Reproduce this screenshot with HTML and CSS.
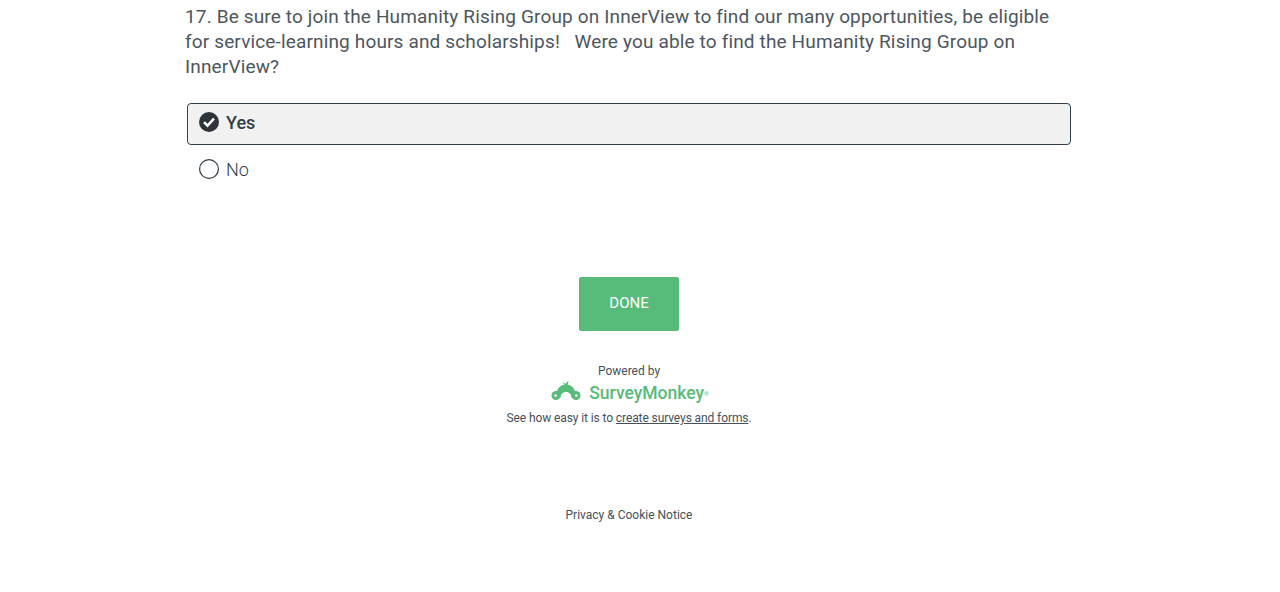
FILE: index.html
```html
<!DOCTYPE html>
<html lang="en">
<head>
  <meta charset="UTF-8">
  <title>Survey</title>
  <link rel="stylesheet" href="styles.css">
</head>
<body>
  <main class="survey">
    <h1 class="question">17. Be sure to join the Humanity Rising Group on InnerView to find our many opportunities, be eligible for service-learning hours and scholarships! &nbsp; Were you able to find the Humanity Rising Group on InnerView?</h1>

    <div class="options">
      <label class="option selected">
        <svg class="mark" width="20" height="20" viewBox="0 0 20 20">
          <circle cx="10" cy="10" r="10" fill="#2f343a"/>
          <path d="M5 10.200l3.500 3.500 6.500-7" fill="none" stroke="#fff" stroke-width="2.500"/>
        </svg>
        <span>Yes</span>
      </label>
      <label class="option">
        <svg class="mark" width="20" height="20" viewBox="0 0 20 20">
          <circle cx="10" cy="10" r="9.400" fill="#fff" stroke="#333e48" stroke-width="1.200"/>
        </svg>
        <span>No</span>
      </label>
    </div>

    <div class="actions">
      <button class="done" type="button">DONE</button>
    </div>

    <footer class="footer">
      <p class="powered">Powered by</p>
      <div class="brand">
        <svg class="brand-icon" width="30" height="20" viewBox="0 0 30 20">
          <path d="M15 3.500C9.500 3.500 6 7.500 5.500 13l4 4C9.600 13.500 11.500 11 15 11s5.400 2.500 5.500 6l4-4C24 7.500 20.500 3.500 15 3.500z" fill="#57bb7a"/>
          <path d="M13.500 4C13 2.500 12 2 11 1.800 12.500 1.300 14 2 15 3 15.300 1.800 16 .6 17.500 0 17.200 1.500 17 3 16.500 4z" fill="#57bb7a"/>
          <circle cx="5" cy="14.500" r="4.500" fill="#57bb7a"/>
          <circle cx="25" cy="14.500" r="4.500" fill="#57bb7a"/>
          <circle cx="4.600" cy="14.500" r="1.300" fill="#fff"/>
          <circle cx="25.400" cy="14.500" r="1.300" fill="#fff"/>
        </svg>
        <span class="brand-name">SurveyMonkey</span><span class="brand-tm">®</span>
      </div>
      <p class="easy">See how easy it is to <a href="#">create surveys and forms</a>.</p>
      <p class="privacy"><a href="#">Privacy &amp; Cookie Notice</a></p>
    </footer>
  </main>
</body>
</html>
```

FILE: styles.css
```css
body {
  margin: 0;
  background: #fff;
  color: #333e48;
  font-family: Roboto, Arial, sans-serif;
}
.survey {
  width: 888px;
  margin-left: 185px;
}
.question {
  margin: 4px 0 0;
  font-size: 19px;
  font-weight: 400;
  line-height: 25px;
  letter-spacing: .15px;
  color: #4c5660;
}
.options {
  margin: 24px 2px 0;
}
.option {
  display: flex;
  align-items: center;
  gap: 7px;
  height: 42px;
  padding: 0 11px;
  box-sizing: border-box;
  border: 1px solid transparent;
  border-radius: 4px;
  font-size: 18px;
  font-weight: 300;
}
.option + .option {
  margin-top: 3px;
}
.selected {
  padding-bottom: 4px;
  background: #f1f1f1;
  border-color: #333e48;
  font-weight: 500;
}
.actions {
  display: flex;
  justify-content: center;
  margin-top: 87px;
}
.done {
  width: 100px;
  height: 54px;
  padding: 0 0 2px;
  border: 0;
  border-radius: 2px;
  background: #57bb7a;
  color: #fff;
  font-family: inherit;
  font-size: 15px;
}
.footer {
  text-align: center;
  font-size: 12px;
  color: #46505a;
}
.footer p {
  margin: 0;
}
.powered {
  padding-top: 32px;
  line-height: 17px;
}
.brand {
  display: flex;
  justify-content: center;
  align-items: center;
  height: 30px;
  padding-left: 2px;
  color: #57bb7a;
}
.brand-icon {
  margin-right: 8px;
  margin-bottom: 8px;
}
.brand-name {
  margin-bottom: 4px;
  font-size: 17.5px;
  font-weight: 500;
}
.brand-tm {
  font-size: 6px;
  margin-bottom: 4px;
}
.footer .easy {
  line-height: 17px;
  letter-spacing: -.1px;
}
.footer a {
  color: inherit;
}
.footer .privacy {
  margin-top: 80px;
  line-height: 17px;
}
.privacy a {
  text-decoration: none;
}
```
